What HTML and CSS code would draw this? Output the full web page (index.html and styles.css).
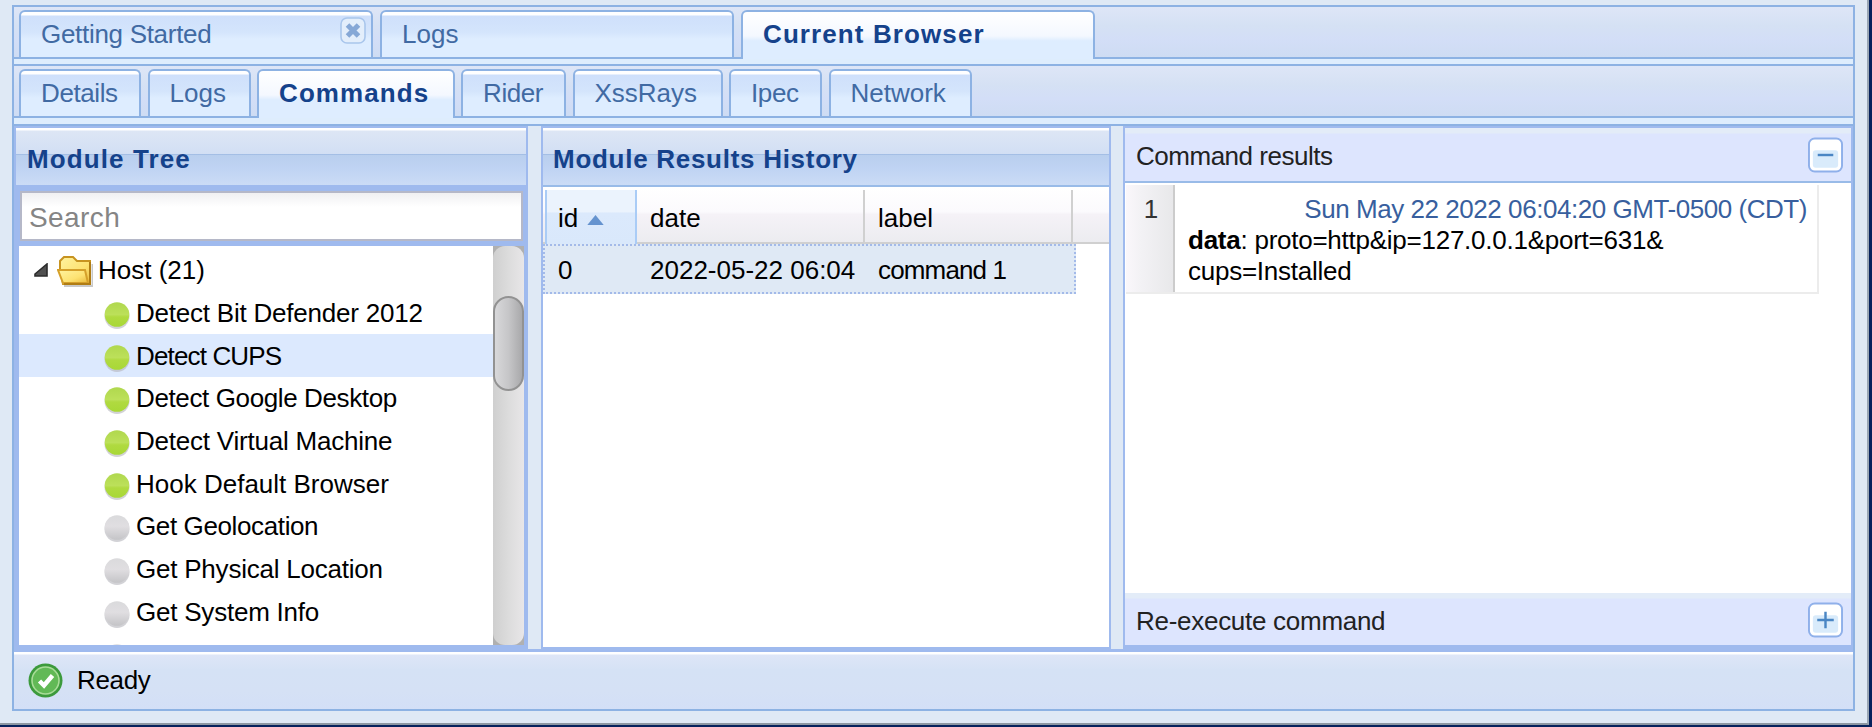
FILE: index.html
```
<!DOCTYPE html>
<html lang="en">
<head>
<meta charset="utf-8">
<title>Control Panel</title>
<link rel="stylesheet" href="styles.css">
</head>
<body>
<svg class="defs" width="0" height="0">
  <defs>
    <linearGradient id="green" x1="0" y1="0" x2="0" y2="1"><stop offset="0" stop-color="#b0d84e"/><stop offset=".5" stop-color="#bce05a"/><stop offset=".6" stop-color="#b0da40"/><stop offset="1" stop-color="#a8d836"/></linearGradient>
    <linearGradient id="gray" x1="0" y1="0" x2="0" y2="1"><stop offset="0" stop-color="#dadadc"/><stop offset=".45" stop-color="#e0dee1"/><stop offset="1" stop-color="#c4c4c7"/></linearGradient>
    <linearGradient id="fold" x1="0" y1="0" x2="1" y2="1"><stop offset="0" stop-color="#fff3a0"/><stop offset=".6" stop-color="#fde272"/><stop offset="1" stop-color="#e9b93c"/></linearGradient>
    <g id="ball"><ellipse class="shade" cx="13" cy="15" rx="12.500" ry="13" fill="#b4b4ba" opacity=".6"/><circle cx="13" cy="13.500" r="12.300"/></g>
  </defs>
</svg>
<div class="window">
  <div class="frame">
    <nav class="strip">
      <div class="tab wide closable"><span class="t-gs">Getting Started</span>
        <svg class="close" width="26" height="27" viewBox="0 0 26 27"><rect x="1" y="1" width="24" height="25" rx="6" fill="#e3eefb" stroke="#a9c6ec" stroke-width="1.600"/><path d="M7.500 8l11 11M18.500 8l-11 11" stroke="#86a8d6" stroke-width="5"/></svg>
      </div>
      <div class="tab wide"><span>Logs</span></div>
      <div class="tab wide active"><span>Current Browser</span></div>
    </nav>
    <div class="spacer"></div>
    <nav class="strip second">
      <div class="tab tight w-details"><span>Details</span></div>
      <div class="tab w-logs"><span>Logs</span></div>
      <div class="tab active w-commands"><span>Commands</span></div>
      <div class="tab tight w-rider"><span>Rider</span></div>
      <div class="tab w-xss"><span>XssRays</span></div>
      <div class="tab tight w-ipec"><span>Ipec</span></div>
      <div class="tab w-network"><span>Network</span></div>
    </nav>
    <div class="spacer last"></div>
    <main class="panes">
      <section class="tree-pane">
        <h2 class="title">Module Tree</h2>
        <div class="search">Search</div>
        <div class="tree">
          <ul class="nodes">
            <li class="root">
              <svg class="arrow" width="14" height="14" viewBox="0 0 14 14"><path d="M13 1v12H1v-2z" fill="#505050" stroke="#2c2c2c" stroke-width="1.600"/></svg>
              <svg class="folder" width="36" height="32" viewBox="0 0 36 32"><path d="M7 31h28.500V9" fill="none" stroke="#c9c9c9" stroke-width="2"/><path d="M3 14V6l4-4h9l4 4h13v23H6z" fill="url(#fold)" stroke="#c79320" stroke-width="2"/><path d="M1 15h27l3 13H6z" fill="url(#fold)" stroke="#d5a02a" stroke-width="2"/><path d="M33 7v22H7" fill="none" stroke="#b07d14" stroke-width="2"/></svg>
              <span>Host (21)</span></li>
            <li><svg class="dot green" width="26" height="28"><use href="#ball"/></svg><span class="n1">Detect Bit Defender 2012</span></li>
            <li class="selected"><svg class="dot green" width="26" height="28"><use href="#ball"/></svg><span class="n2">Detect CUPS</span></li>
            <li><svg class="dot green" width="26" height="28"><use href="#ball"/></svg><span class="n3">Detect Google Desktop</span></li>
            <li><svg class="dot green" width="26" height="28"><use href="#ball"/></svg><span class="n1">Detect Virtual Machine</span></li>
            <li><svg class="dot green" width="26" height="28"><use href="#ball"/></svg><span>Hook Default Browser</span></li>
            <li><svg class="dot gray" width="26" height="28"><use href="#ball"/></svg><span class="n3">Get Geolocation</span></li>
            <li><svg class="dot gray" width="26" height="28"><use href="#ball"/></svg><span class="n1">Get Physical Location</span></li>
            <li><svg class="dot gray" width="26" height="28"><use href="#ball"/></svg><span class="n1">Get System Info</span></li>
            <li><svg class="dot gray" width="26" height="28"><use href="#ball"/></svg></li>
          </ul>
          <div class="scrollbar"><div class="track"><div class="thumb"></div></div></div>
        </div>
      </section>
      <section class="grid-pane">
        <h2 class="title">Module Results History</h2>
        <div class="grid-head">
          <div class="col sorted">id<svg width="17" height="10" viewBox="0 0 18 11"><path d="M9 0l9 11H0z" fill="#6593cf"/></svg></div>
          <div class="col c-date">date</div>
          <div class="col c-label">label</div>
        </div>
        <div class="grid-row"><span class="g-id">0</span><span class="g-date">2022-05-22 06:04</span><span class="g-label">command 1</span></div>
      </section>
      <section class="result-pane">
        <div class="acc-head"><span>Command results</span><svg width="35" height="36" viewBox="0 0 36 36"><rect x="1" y="1" width="34" height="34" rx="6" fill="#fff" stroke="#8fb0ea" stroke-width="2"/><rect x="5" y="13" width="26" height="18" rx="3" fill="#d9ebfb"/><path d="M10 18h16" stroke="#4a86c4" stroke-width="2.500"/></svg></div>
        <div class="results">
          <div class="entry">
            <div class="num">1</div>
            <div class="body"><div class="date">Sun May 22 2022 06:04:20 GMT-0500 (CDT)</div><div><b>data</b>: proto=http&amp;ip=127.0.0.1&amp;port=631&amp;</div><div>cups=Installed</div></div>
          </div>
        </div>
        <div class="acc-head bottom"><span>Re-execute command</span><svg width="35" height="36" viewBox="0 0 36 36"><rect x="1" y="1" width="34" height="34" rx="6" fill="#fff" stroke="#8fb0ea" stroke-width="2"/><rect x="5" y="13" width="26" height="18" rx="3" fill="#d9ebfb"/><path d="M9.500 18h17M18 9.500v17" stroke="#4a86c4" stroke-width="2.500"/></svg></div>
      </section>
    </main>
    <footer class="status">
      <svg width="35" height="35" viewBox="0 0 35 35"><circle cx="17.500" cy="17.500" r="17" fill="#3c9a3c"/><circle cx="17.500" cy="17.500" r="13.500" fill="#62b956" stroke="#a9dc98" stroke-width="1.600"/><path d="M11.500 18l4.500 4.500 8.500-10" fill="none" stroke="#fff" stroke-width="4.500"/></svg>
      <span>Ready</span>
    </footer>
  </div>
</div>
</body>
</html>
```
FILE: styles.css
```
* { box-sizing: border-box; }
body { margin: 0; background: #06215c; font: 26px/30px "Liberation Sans", Arial, sans-serif; color: #111; overflow: hidden; }
.defs { display: block; position: absolute; }
.window { width: 1869px; height: 725px; padding: 5px 14px 0 12px; background: #dfe9f5; border-right: 2px solid #9aa7b5; border-bottom: 2px solid #8d97a3; }
.frame { width: 1843px; height: 706px; border: 2px solid #8db2e3; display: flex; flex-direction: column; }
.strip { height: 52px; flex: none; display: flex; gap: 7px; padding: 3px 0 0 5px; background: linear-gradient(#dee6f7 0, #d5e1f4 38%, #d3def7 65%, #cedcf3 100%); border-bottom: 2px solid #8db2e3; }
.second { gap: 6.500px; }
.tab { height: 47px; border: 2px solid #8db2e3; border-bottom: 0; border-radius: 6px 6px 0 0; padding: 6.500px 0 0 20px; color: #416aa3; background: linear-gradient(#fff 0, #fff 3px, #cfe0fb 4px, #d4e5fc 45%, #deedff 60%, #deedff 100%); white-space: nowrap; }
.tab.wide { width: 354px; }
.tab.tight { letter-spacing: -.4px; }
.tab.active { height: 50px; color: #15428b; font-weight: bold; letter-spacing: 1.100px; background: linear-gradient(#fff 0, #f4f8ff 50%, #deedff 60%, #deedff 100%); }
.closable { display: flex; justify-content: space-between; padding-right: 5px; }
.t-gs { letter-spacing: -.3px; }
.close { margin-top: -2px; }
.spacer { height: 7px; flex: none; background: #deedfd; border-bottom: 2px solid #8db2e3; }
.spacer.last { height: 8px; }
.w-details { width: 122px; } .w-logs { width: 103px; } .w-commands { width: 197.500px; } .w-rider { width: 105px; }
.w-xss { width: 150px; } .w-ipec { width: 93px; } .w-network { width: 143px; }
.panes { height: 526px; flex: none; display: flex; background: #dfe9f5; border-bottom: 3px solid #9fbaee; }
.title { margin: 0; height: 57px; flex: none; font-size: 26px; line-height: 63px; letter-spacing: 1.100px; color: #15428b; background: linear-gradient(#fff 0, #fff 2px, #dde6f5 3px, #d2dff4 45%, #9db9e2 46%, #b9cfee 48%, #bfd3f3 70%, #cbdcf6 100%); white-space: nowrap; }
.tree-pane { width: 514px; border: solid #9fbaee; border-width: 2px 2px 4px 2px; background: #9fbaee; display: flex; flex-direction: column; }
.tree-pane .title { padding-left: 11px; }
.search { margin: 6px 3px 5px 4px; height: 50px; flex: none; border: 2px solid #b5b8c8; background: linear-gradient(#f0f0f2, #fff 14px); color: #858585; font-size: 28px; line-height: 49px; padding-left: 7px; letter-spacing: .400px; }
.tree { flex: 1; min-height: 0; margin: 0 2px 0 3px; display: flex; background: #fff; overflow: hidden; }
.nodes { list-style: none; margin: 0; padding: 3px 0 0; width: 474px; color: #000; }
.nodes li { height: 42.700px; display: flex; align-items: center; padding-left: 85px; gap: 6px; white-space: nowrap; }
.nodes .root { padding-left: 15px; gap: 0; }
.arrow { margin-right: 9px; } .folder { margin: 2px 5px 0 0; }
.nodes .selected { background: #dce9fe; }
.dot { margin-top: 4px; }
.dot.green { fill: url(#green); }
.dot.gray { fill: url(#gray); }
.n1 { letter-spacing: -.220px; } .n2 { letter-spacing: -.850px; } .n3 { letter-spacing: -.380px; }
.scrollbar { width: 31px; background: #b0b0b0; }
.track { height: 100%; border-radius: 12px; background: linear-gradient(90deg, #cfcfcf, #dcdcdc 50%, #e8e6e8); padding-top: 50px; }
.thumb { height: 95px; border: 2px solid #929292; border-radius: 16px; background: linear-gradient(90deg, #d8d8da, #c6c6c8 50%, #a9a9ab); }
.grid-pane { margin-left: 13px; width: 570px; border: 2px solid #9fbaee; background: #fff; }
.grid-pane .title { height: 59px; padding-left: 10px; letter-spacing: .720px; border-bottom: 2px solid #99bbe8; }
.grid-head { height: 57px; display: flex; padding: 3px 0 0 2px; color: #000; background: linear-gradient(#fff 0, #fbfafd 45%, #f5f2f7 50%, #ececf0 100%); border-bottom: 2px solid #d0d0d0; line-height: 57px; }
.col { height: 54px; border-right: 2px solid #d0d0d0; padding-left: 13px; }
.sorted { width: 92px; padding-left: 11px; border: solid #aaccf6; border-width: 0 2px; background: linear-gradient(#ebf3fd 0, #ebf3fd 40%, #dbe9fc 43%, #d9e8fb); }
.sorted svg { margin: 0 0 2px 9px; }
.c-date { width: 228px; } .c-label { width: 208px; }
.grid-row { width: 533px; height: 50px; display: flex; border: 2px dotted #a3bae9; background: #dfe9f5; line-height: 48px; color: #000; white-space: nowrap; }
.g-id { width: 105px; padding-left: 13px; } .g-date { width: 228px; } .g-label { letter-spacing: -.850px; }
.result-pane { margin-left: 12px; width: 730px; border: solid #9fbaee; border-width: 2px 2px 4px; background: #fff; display: flex; flex-direction: column; }
.acc-head { height: 55px; flex: none; display: flex; justify-content: space-between; padding: 9px 8px 0 11px; background: linear-gradient(#e3ecf8 0, #e3ecf8 5px, #dde5fe 6px); border-bottom: 2px solid #99bbe8; line-height: 39px; color: #222; letter-spacing: -.480px; }
.acc-head.bottom { height: 52px; border: 0; letter-spacing: -.280px; }
.results { flex: 1; padding: 2px 0 0 1px; }
.entry { width: 693px; height: 109px; display: flex; border: solid #ececec; border-width: 0 2px 2px 0; }
.num { width: 49px; text-align: center; padding: 9px 0 0 3px; border-right: 2px solid #ccc; background: linear-gradient(90deg, #faf7fb, #f3f2f5 30%, #e8e8ea); color: #333; }
.body { flex: 1; padding: 9px 10px 0 13px; line-height: 31px; color: #000; white-space: nowrap; letter-spacing: -.250px; }
.date { text-align: right; color: #385f9e; letter-spacing: -.450px; }
.status { flex: 1; display: flex; align-items: center; gap: 14px; padding: 0 0 1px 14px; color: #000; letter-spacing: -.350px; background: linear-gradient(#fff 0, #fff 2px, #dee6f7 3px, #d5e2f5 32%, #d5e1f5 70%, #d3dff7 100%); }
```
